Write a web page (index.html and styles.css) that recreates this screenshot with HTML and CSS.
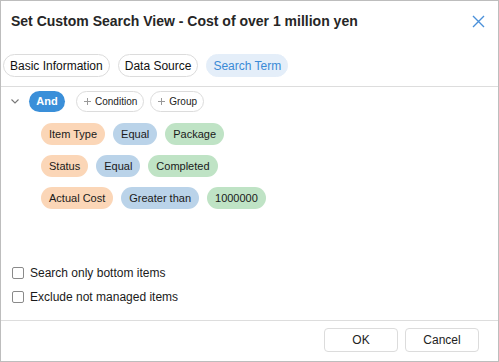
FILE: index.html
```html
<!DOCTYPE html>
<html lang="en">
<head>
    <meta charset="UTF-8">
    <title>Set Custom Search View</title>
    <link rel="stylesheet" href="styles.css">
</head>
<body>
    <div class="dialog">
        <div class="top">
            <div class="header">
                <h1>Set Custom Search View - Cost of over 1 million yen</h1>
                <button class="close" title="Close">
                    <svg width="13" height="13" viewBox="0 0 13 13"><path d="M1 1 L12 12 M12 1 L1 12" stroke="#4a90d9" stroke-width="1.4" fill="none"/></svg>
                </button>
            </div>
            <div class="tabs">
                <span class="tab">Basic Information</span>
                <span class="tab">Data Source</span>
                <span class="tab active">Search Term</span>
            </div>
        </div>

        <div class="content">
            <div class="group-row">
                <svg class="chevron" width="8" height="5" viewBox="0 0 8 5"><path d="M0.5 0.5 L4 4 L7.5 0.5" stroke="#777" stroke-width="1.1" fill="none"/></svg>
                <span class="and">And</span>
                <span class="add"><svg class="plus" width="7" height="7" viewBox="0 0 7 7"><path d="M3.5 0 V7 M0 3.5 H7" stroke="#999" stroke-width="1" fill="none"/></svg>Condition</span>
                <span class="add"><svg class="plus" width="7" height="7" viewBox="0 0 7 7"><path d="M3.5 0 V7 M0 3.5 H7" stroke="#999" stroke-width="1" fill="none"/></svg>Group</span>
            </div>

            <div class="conditions">
                <div class="cond">
                    <span class="chip field">Item Type</span>
                    <span class="chip op">Equal</span>
                    <span class="chip value">Package</span>
                </div>
                <div class="cond">
                    <span class="chip field">Status</span>
                    <span class="chip op">Equal</span>
                    <span class="chip value">Completed</span>
                </div>
                <div class="cond">
                    <span class="chip field">Actual Cost</span>
                    <span class="chip op">Greater than</span>
                    <span class="chip value">1000000</span>
                </div>
            </div>

            <div class="options">
                <label class="check"><input type="checkbox"> Search only bottom items</label>
                <label class="check"><input type="checkbox"> Exclude not managed items</label>
            </div>
        </div>

        <div class="footer">
            <button class="btn">OK</button>
            <button class="btn">Cancel</button>
        </div>
    </div>
</body>
</html>
```

FILE: styles.css
```css
* {
    box-sizing: border-box;
}
body {
    margin: 0;
    font-family: "Liberation Sans", Arial, sans-serif;
    color: #222;
    background-color: #fff;
}
.dialog {
    width: 499px;
    height: 362px;
    border: 1px solid #bdbdbd;
    display: flex;
    flex-direction: column;
}
.top {
    border-bottom: 1px solid #ddd;
    height: 86px;
}
.header {
    height: 40px;
    display: flex;
    align-items: center;
    justify-content: space-between;
    padding: 0 13px 0 10px;
}
h1 {
    margin: 0;
    font-size: 14px;
    font-weight: bold;
    color: #262626;
}
.close {
    border: none;
    background: none;
    padding: 0;
    width: 13px;
    height: 13px;
    display: flex;
    cursor: pointer;
}
.tabs {
    display: flex;
    gap: 8px;
    padding: 13px 2px 0;
}
.tab {
    height: 23px;
    padding: 0 6px;
    border: 1px solid #dcdcdc;
    border-radius: 12px;
    font-size: 12px;
    display: flex;
    align-items: center;
    color: #111;
}
.tab.active {
    background-color: #e4eef9;
    border-color: #e4eef9;
    color: #3a8ad6;
}
.content {
    flex: 1;
    display: flex;
    flex-direction: column;
    padding: 3px 0 16px;
}
.group-row {
    display: flex;
    align-items: center;
    height: 22px;
    padding-left: 10px;
}
.chevron {
    margin-right: 10px;
}
.and {
    background-color: #3a8fd9;
    color: #fff;
    font-weight: bold;
    font-size: 11px;
    height: 21px;
    width: 36px;
    border-radius: 11px;
    display: flex;
    align-items: center;
    justify-content: center;
    margin-right: 11px;
}
.add {
    height: 21px;
    border: 1px solid #dcdcdc;
    border-radius: 11px;
    font-size: 10px;
    display: flex;
    align-items: center;
    padding: 0 6px 0 7px;
    margin-right: 6px;
    color: #222;
}
.plus {
    margin-right: 4px;
}
.conditions {
    padding: 11px 0 0 40px;
    display: flex;
    flex-direction: column;
    gap: 10px;
}
.cond {
    display: flex;
    gap: 8px;
}
.chip {
    height: 22px;
    border-radius: 11px;
    font-size: 11px;
    padding: 0 8px;
    display: flex;
    align-items: center;
    color: #1a1a1a;
}
.chip.field {
    background-color: #fbd6b7;
}
.chip.op {
    background-color: #bad3e9;
}
.chip.value {
    background-color: #bfe3c5;
}
.options {
    margin-top: auto;
    display: flex;
    flex-direction: column;
    gap: 10px;
    padding-left: 11px;
}
.check {
    display: flex;
    align-items: center;
    font-size: 12px;
    height: 14px;
    color: #1a1a1a;
}
.check input {
    appearance: none;
    width: 12px;
    height: 12px;
    margin: 0 6px 0 0;
    border: 1px solid #8a8a8a;
    border-radius: 2px;
    background: #fff;
}
.footer {
    height: 41px;
    border-top: 1px solid #ddd;
    display: flex;
    justify-content: flex-end;
    align-items: center;
    gap: 7px;
    padding: 0 19px 2px 0;
}
.btn {
    width: 74px;
    height: 24px;
    border: 1px solid #dcdcdc;
    border-radius: 4px;
    background-color: #fff;
    font-family: "Liberation Sans", Arial, sans-serif;
    font-size: 12px;
    color: #222;
    cursor: pointer;
}
```
